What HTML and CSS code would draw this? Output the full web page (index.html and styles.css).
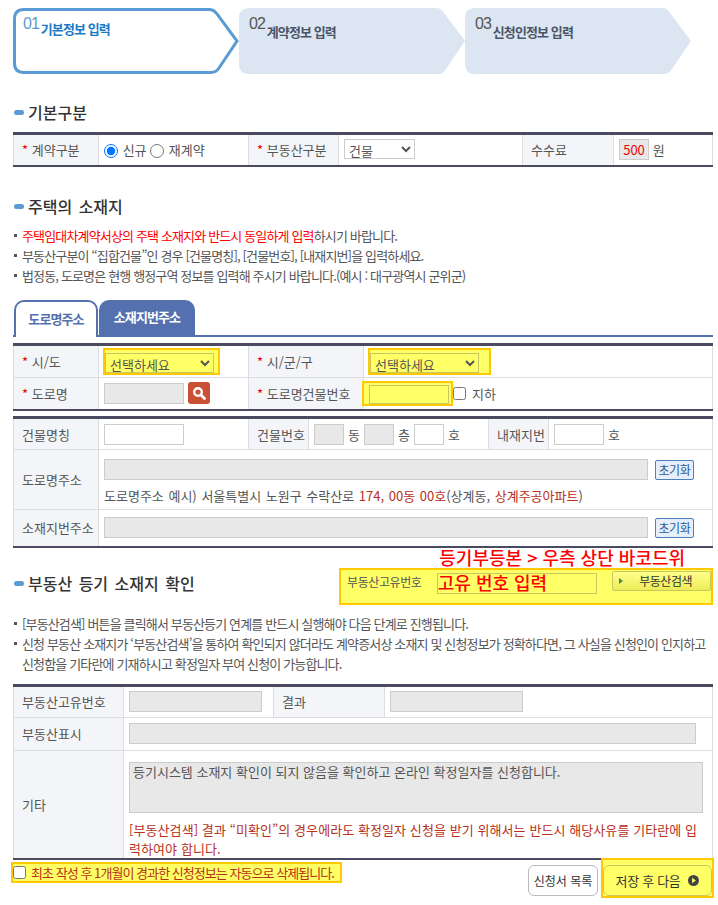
FILE: index.html
```html
<!DOCTYPE html>
<html lang="ko">

<head>
    <meta charset="UTF-8">
    <meta name="viewport" content="width=device-width, initial-scale=1.0">
    <title>기본정보 입력</title>
    <link rel="stylesheet" href="styles.css">
</head>

<body>
    <div class="wrap">
        <!-- 단계 -->
        <ol class="steps">
            <li class="step on">
                <svg class="step-bg" width="226" height="66" viewBox="0 0 226 66"><path d="M11 1.500H196Q201 1.500 204 6L224 33L206 60Q203 64.500 198 64.500H11Q1.500 64.500 1.500 55V11Q1.500 1.500 11 1.500Z"/></svg>
                <span class="num">01</span><strong>기본정보 입력</strong>
            </li>
            <li class="step">
                <svg class="step-bg" width="226" height="66" viewBox="0 0 226 66"><path d="M10 0H197Q202 0 205 5L226 33L207 61Q204 66 199 66H10Q0 66 0 56V10Q0 0 10 0Z"/></svg>
                <span class="num">02</span><strong>계약정보 입력</strong>
            </li>
            <li class="step">
                <svg class="step-bg" width="226" height="66" viewBox="0 0 226 66"><path d="M10 0H197Q202 0 205 5L226 33L207 61Q204 66 199 66H10Q0 66 0 56V10Q0 0 10 0Z"/></svg>
                <span class="num">03</span><strong>신청인정보 입력</strong>
            </li>
        </ol>

        <h3 class="tit tit-first">기본구분</h3>
        <table class="tbl">
            <colgroup><col class="c85"><col class="c150"><col class="c90"><col class="c184"><col class="c91"><col></colgroup>
            <tr>
                <th><em>*</em> 계약구분</th>
                <td><input type="radio" name="kind" checked> 신규 <input type="radio" name="kind"> 재계약</td>
                <th><em>*</em> 부동산구분</th>
                <td><select class="sel-small"><option>건물</option></select></td>
                <th>수수료</th>
                <td><span class="fee">500</span> 원</td>
            </tr>
        </table>

        <h3 class="tit tit-second">주택의 소재지</h3>
        <ul class="notes">
            <li><span class="red">주택임대차계약서상의 주택 소재지와 반드시 동일하게 입력</span>하시기 바랍니다.</li>
            <li>부동산구분이 “집합건물”인 경우 [건물명칭], [건물번호], [내재지번]을 입력하세요.</li>
            <li>법정동, 도로명은 현행 행정구역 정보를 입력해 주시기 바랍니다.(예시 : 대구광역시 군위군)</li>
        </ul>

        <div class="tabs">
            <a class="tab on">도로명주소</a>
            <a class="tab">소재지번주소</a>
        </div>
        <table class="tbl t-road">
            <colgroup><col class="c85"><col class="c150"><col class="c115"><col></colgroup>
            <tr>
                <th><em>*</em> 시/도</th>
                <td><span class="mark"><select class="sel-area"><option>선택하세요</option></select></span></td>
                <th><em>*</em> 시/군/구</th>
                <td><span class="mark mark-wide"><select class="sel-area"><option>선택하세요</option></select></span></td>
            </tr>
            <tr>
                <th><em>*</em> 도로명</th>
                <td>
                    <div class="cell-row">
                        <input class="inp w80 off" type="text">
                        <button class="btn-search" type="button">
                            <svg width="14" height="14" viewBox="0 0 14 14"><circle cx="6" cy="6" r="3.800" fill="none" stroke="#fff" stroke-width="2.400"/><path d="M9 9L12.500 12.500" stroke="#fff" stroke-width="2.800" stroke-linecap="round"/></svg>
                        </button>
                    </div>
                </td>
                <th><em>*</em> 도로명건물번호</th>
                <td>
                    <div class="cell-row cell-num">
                        <span class="mark-num"><input class="inp w80 yellow" type="text"></span>
                        <input type="checkbox" class="chk"> 지하
                    </div>
                </td>
            </tr>
        </table>

        <table class="tbl t-addr">
            <colgroup><col class="c85"><col class="c150"><col class="c60"><col class="c180"><col class="c60"><col></colgroup>
            <tr>
                <th>건물명칭</th>
                <td><input class="inp w80" type="text"></td>
                <th>건물번호</th>
                <td>
                    <div class="cell-row">
                        <input class="inp w30 off" type="text"> 동
                        <input class="inp w30 off" type="text"> 층
                        <input class="inp w30" type="text"> 호
                    </div>
                </td>
                <th>내재지번</th>
                <td>
                    <div class="cell-row"><input class="inp w50" type="text"> 호</div>
                </td>
            </tr>
            <tr>
                <th>도로명주소</th>
                <td colspan="5">
                    <div class="cell-row"><input class="inp w544 off" type="text"><button class="btn-reset" type="button">초기화</button></div>
                    <p class="sample">도로명주소 예시) 서울특별시 노원구 수락산로 <span class="dark-red">174, 00동 00호</span>(상계동, <span class="dark-red">상계주공아파트</span>)</p>
                </td>
            </tr>
            <tr>
                <th>소재지번주소</th>
                <td colspan="5">
                    <div class="cell-row"><input class="inp w544 off" type="text"><button class="btn-reset" type="button">초기화</button></div>
                </td>
            </tr>
        </table>

        <p class="memo">등기부등본 &gt; 우측 상단 바코드위</p>
        <div class="reg-head">
            <h3 class="tit">부동산 등기 소재지 확인</h3>
            <div class="reg-box">
                <label>부동산고유번호</label>
                <span class="reg-input">고유 번호 입력</span>
                <button class="btn-reg" type="button">부동산검색</button>
            </div>
        </div>
        <ul class="notes notes-reg">
            <li>[부동산검색] 버튼을 클릭해서 부동산등기 연계를 반드시 실행해야 다음 단계로 진행됩니다.</li>
            <li>신청 부동산 소재지가 ‘부동산검색’을 통하여 확인되지 않더라도 계약증서상 소재지 및 신청정보가 정확하다면, 그 사실을 신청인이 인지하고<br>신청함을 기타란에 기재하시고 확정일자 부여 신청이 가능합니다.</li>
        </ul>

        <table class="tbl t-reg">
            <colgroup><col class="c110"><col class="c150"><col class="c111"><col></colgroup>
            <tr>
                <th>부동산고유번호</th>
                <td><input class="inp w133 off" type="text"></td>
                <th>결과</th>
                <td><input class="inp w133 off" type="text"></td>
            </tr>
            <tr>
                <th>부동산표시</th>
                <td colspan="3"><input class="inp w567 off" type="text"></td>
            </tr>
            <tr>
                <th>기타</th>
                <td colspan="3">
                    <div class="textarea">등기시스템 소재지 확인이 되지 않음을 확인하고 온라인 확정일자를 신청합니다.</div>
                    <p class="warn">[부동산검색] 결과 “미확인”의 경우에라도 확정일자 신청을 받기 위해서는 반드시 해당사유를 기타란에 입<br>력하여야 합니다.</p>
                </td>
            </tr>
        </table>

        <div class="foot">
            <label class="foot-note"><input type="checkbox" class="chk-big"> 최초 작성 후 1개월이 경과한 신청정보는 자동으로 삭제됩니다.</label>
            <div class="foot-btns">
                <button class="btn-list" type="button">신청서 목록</button>
                <span class="mark-save">
                    <button class="btn-save" type="button">저장 후 다음
                        <svg width="11" height="11" viewBox="0 0 12 12"><circle cx="6" cy="6" r="6" fill="#444"/><path d="M4.500 3L8.500 6L4.500 9Z" fill="#ffff66"/></svg>
                    </button>
                </span>
            </div>
        </div>
    </div>
</body>

</html>
```

FILE: styles.css
```css
* {
    box-sizing: border-box;
}

body {
    margin: 0;
    background: #fff;
    color: #555;
    font-family: "Noto Sans CJK KR", "Noto Sans", sans-serif;
    font-size: 13px;
}

.wrap {
    width: 718px;
    height: 905px;
    padding: 8px 0 0 13px;
    overflow: hidden;
}

/* steps */
.steps {
    display: flex;
    list-style: none;
    margin: 0;
    padding: 0;
    height: 66px;
}

.step {
    position: relative;
    width: 226px;
    display: flex;
    align-items: flex-start;
    padding: 7px 0 0 10px;
}

.step-bg {
    position: absolute;
    left: 0;
    top: 0;
}

.step-bg path {
    fill: #dce6f2;
}

.step.on .step-bg path {
    fill: #fff;
    stroke: #5b9bd5;
    stroke-width: 3;
}

.step .num {
    position: relative;
    font-family: "Liberation Sans", sans-serif;
    font-size: 16px;
    line-height: 18px;
    letter-spacing: -1px;
    color: #555;
}

.step.on .num {
    color: #5b9bd5;
}

.step strong {
    position: relative;
    margin: 9px 0 0 2px;
    font-size: 13px;
    line-height: 16px;
    color: #4a5568;
    letter-spacing: -0.9px;
}

.step.on strong {
    margin-top: 6px;
    color: #1a7ac8;
}

/* titles */
.tit {
    position: relative;
    margin: 0;
    padding-left: 15px;
    font-size: 16px;
    line-height: 20px;
    font-weight: 500;
    word-spacing: 2px;
    color: #333;
}

.tit::before {
    content: "";
    position: absolute;
    left: 1px;
    top: 8px;
    width: 10px;
    height: 5px;
    border-radius: 3px;
    background: #5b9bd5;
}

.tit-first {
    margin: 28px 0 10px;
}

.tit-second {
    margin: 29px 0 0;
}

/* tables */
.tbl {
    width: 700px;
    table-layout: fixed;
    border-collapse: collapse;
    border-top: 3px solid #4a4a60;
    border-bottom: 2px solid #4a4a60;
}

.tbl th,
.tbl td {
    border: 1px solid #dcdde0;
    padding: 0 5px;
    font-weight: 400;
    height: 32px;
    color: #555;
}

.tbl th {
    text-align: left;
    background: #f4f5f8;
    padding: 0 0 0 8px;
    white-space: nowrap;
}

.tbl th em {
    color: #e00;
    font-style: normal;
}

.c85 { width: 85px; }
.c90 { width: 90px; }
.c91 { width: 91px; }
.c60 { width: 60px; }
.c110 { width: 110px; }
.c111 { width: 111px; }
.c115 { width: 115px; }
.c150 { width: 150px; }
.c180 { width: 180px; }
.c184 { width: 184px; }

input[type="radio"] {
    margin: 0 1px 0 0;
    vertical-align: -3px;
    width: 14px;
    height: 14px;
}

select {
    height: 20px;
    font: inherit;
    color: #555;
    background: #fff;
    border: 1px solid #ccc;
    padding: 0;
}

.sel-small {
    width: 71px;
}

.sel-area {
    display: block;
    width: 109px;
    background: transparent;
    border-color: #c8c860;
}

.fee {
    display: inline-block;
    width: 30px;
    height: 21px;
    line-height: 19px;
    text-align: center;
    color: #e00;
    background: #e8e8e8;
    border: 1px solid #ccc;
}

.inp {
    height: 21px;
    border: 1px solid #ccc;
    background: #fff;
    vertical-align: middle;
}

.inp.off {
    background: #e8e8e8;
}

.inp.yellow {
    display: block;
    height: 19px;
    background: transparent;
    border-color: #c8c860;
}

.w30 { width: 30px; }
.w50 { width: 50px; }
.w80 { width: 80px; }
.w133 { width: 133px; }
.w544 { width: 544px; }
.w567 { width: 567px; }

.cell-row {
    display: flex;
    align-items: center;
    gap: 4px;
}

.cell-num {
    gap: 6px;
}

.mark {
    display: inline-block;
    background: #ffff66;
    border: 2px solid #ffc800;
    padding: 3px 4px 0 0;
    vertical-align: middle;
    margin-left: -1px;
}

.mark-wide {
    padding-right: 10px;
}

.mark-num {
    display: block;
    margin: 0 -6px 0 -7px;
    padding: 2px 2px 0 5px;
    background: #ffff66;
    border: 2px solid #ffc800;
}

.chk {
    margin: 0;
    width: 13px;
    height: 13px;
}

.btn-search {
    width: 22px;
    height: 22px;
    padding: 0;
    border: 0;
    border-radius: 3px;
    background: #c94f35;
    display: flex;
    align-items: center;
    justify-content: center;
}

.btn-reset {
    width: 39px;
    height: 20px;
    padding: 0;
    margin-left: 3px;
    font: inherit;
    font-size: 12px;
    letter-spacing: -0.3px;
    color: #2c5a96;
    background: #e6eefa;
    border: 1px solid #4a7fc0;
    border-radius: 2px;
}

.sample {
    margin: 7px 0 0;
    line-height: 18px;
    word-spacing: 1px;
}

.dark-red {
    color: #b8301a;
}

.red {
    color: #f00;
}

/* notes */
.notes {
    list-style: none;
    margin: 10px 0 0;
    padding: 0 0 0 9px;
    line-height: 20px;
    letter-spacing: -0.85px;
}

.notes li {
    position: relative;
}

.notes li::before {
    content: "";
    position: absolute;
    left: -8px;
    top: 8px;
    width: 3px;
    height: 3px;
    background: #555;
}

/* tabs */
.tabs {
    display: flex;
    gap: 1px;
    width: 700px;
    height: 37px;
    margin: 14px 0 6px;
    padding-left: 1px;
    border-bottom: 2px solid #5470ae;
}

.tab {
    width: 96px;
    height: 37px;
    line-height: 34px;
    text-align: center;
    font-size: 13px;
    font-weight: 700;
    color: #fff;
    background: #5470ae;
    border-radius: 10px 10px 0 0;
    letter-spacing: -0.9px;
}

.tab.on {
    width: 84px;
    color: #5470ae;
    background: #fff;
    border: 2px solid #5470ae;
    border-bottom: 0;
}

/* tables 2, 3 */
.t-road td {
    height: 33px;
}

.t-addr {
    margin-top: 5px;
}

.t-addr tr:nth-child(2) td {
    height: 60px;
    padding-top: 9px;
    vertical-align: top;
}

.t-addr tr:nth-child(3) td {
    height: 37px;
}

.t-addr td {
    white-space: nowrap;
}

/* registry */
.memo {
    width: 700px;
    height: 21px;
    margin: -1px 0 0;
    padding-right: 28px;
    text-align: right;
    font-size: 18px;
    line-height: 21px;
    font-weight: 500;
    color: #f00;
}

.reg-head {
    display: flex;
    justify-content: space-between;
    align-items: flex-start;
    width: 700px;
    height: 37px;
}

.reg-head .tit {
    margin-top: 5px;
}

.reg-box {
    display: flex;
    align-items: flex-start;
    width: 374px;
    height: 37px;
    padding: 3px 0 0 6px;
    background: #ffff66;
    border: 2px solid #ffc800;
    font-size: 12px;
}

.reg-box label {
    width: 90px;
    line-height: 18px;
    letter-spacing: -0.4px;
}

.reg-input {
    width: 161px;
    height: 21px;
    line-height: 17px;
    font-size: 18px;
    font-weight: 500;
    color: #f00;
    border: 1px solid #c8c860;
}

.btn-reg {
    display: flex;
    align-items: center;
    width: 99px;
    height: 20px;
    margin: -2px 0 0 15px;
    padding: 0 0 0 6px;
    font: inherit;
    font-size: 12px;
    letter-spacing: -0.5px;
    color: #333;
    background: linear-gradient(#ffff8c, #ecec58);
    border: 1px solid #c8c860;
    border-radius: 2px;
}

.btn-reg::before {
    content: "";
    margin-right: 16px;
    border-left: 4px solid #4a8a50;
    border-top: 3px solid transparent;
    border-bottom: 3px solid transparent;
}

.notes-reg {
    margin-top: 9px;
}

.t-reg {
    margin-top: 10px;
}

.t-reg tr:nth-child(2) td {
    height: 33px;
}

.t-reg tr:nth-child(3) td {
    height: 109px;
    padding-top: 11px;
    vertical-align: top;
}

.textarea {
    width: 574px;
    height: 51px;
    padding: 0 3px;
    line-height: 17px;
    background: #e8e8e8;
    border: 1px solid #ccc;
}

.warn {
    margin: 7px 0 0;
    line-height: 19px;
    color: #b8301a;
    letter-spacing: 0.08px;
}

/* footer */
.foot {
    display: flex;
    justify-content: space-between;
    align-items: flex-start;
    width: 703px;
    margin-left: -2px;
}

.foot-note {
    display: flex;
    align-items: center;
    width: 331px;
    height: 21px;
    margin-top: 2px;
    background: #ffff66;
    border: 2px solid #ffc800;
    color: #b8301a;
    letter-spacing: -0.95px;
    white-space: nowrap;
}

.chk-big {
    margin: 0 5px 0 0;
    width: 13px;
    height: 13px;
}

.foot-btns {
    display: flex;
    align-items: flex-start;
    gap: 3px;
    margin-top: -2px;
}

.btn-list {
    width: 70px;
    height: 31px;
    margin-top: 7px;
    padding: 0;
    font: inherit;
    font-size: 12px;
    color: #333;
    background: #fff;
    border: 1px solid #bbb;
    border-radius: 6px;
}

.mark-save {
    display: block;
    padding: 5px 0 0;
    border: 2px solid #ffc800;
    background: #ffff66;
}

.btn-save {
    display: flex;
    align-items: center;
    justify-content: center;
    gap: 8px;
    width: 109px;
    height: 31px;
    padding: 0;
    font: inherit;
    letter-spacing: -0.3px;
    color: #333;
    background: transparent;
    border: 1px solid #c8c860;
    border-radius: 6px;
}
```
